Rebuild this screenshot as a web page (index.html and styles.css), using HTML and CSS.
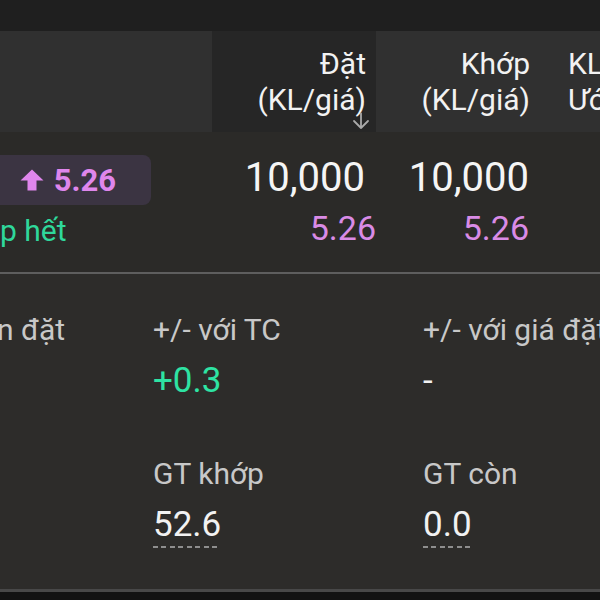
FILE: index.html
```html
<!DOCTYPE html>
<html lang="vi">
<head>
<meta charset="utf-8">
<title>Lệnh đặt</title>
<link rel="stylesheet" href="styles.css">
</head>
<body>
<div class="screen">
  <div class="topbar"></div>

  <div class="thead">
    <div class="th th-blank"></div>
    <div class="th th-sorted">
      <span>Đặt</span>
      <span>(KL/giá)</span>
      <svg class="sort-icon" viewBox="0 0 20 20" width="20" height="20" aria-hidden="true">
        <path d="M10 2.5 V17 M3 10 L10 17 L17 10" fill="none" stroke="#a9a9a9" stroke-width="1.8" stroke-linecap="round" stroke-linejoin="round"/>
      </svg>
    </div>
    <div class="th">
      <span>Khớp</span>
      <span>(KL/giá)</span>
    </div>
    <div class="th th-left">
      <span>KL</span>
      <span>Ước</span>
    </div>
  </div>

  <div class="trow">
    <div class="cell-status">
      <div class="badge">
        <svg class="badge-arrow" viewBox="0 0 24 22" width="24" height="22" aria-hidden="true">
          <path d="M12 0.5 L23.5 11.5 H16.5 V21.5 H7.5 V11.5 H0.5 Z" fill="#df86ec"/>
        </svg>
        <span class="badge-text">5.26</span>
      </div>
      <div class="status-text">p hết</div>
    </div>
    <div class="cell-num cell-first">
      <span class="qty">10,000</span>
      <span class="price">5.26</span>
    </div>
    <div class="cell-num">
      <span class="qty">10,000</span>
      <span class="price">5.26</span>
    </div>
    <div class="cell-rest"></div>
  </div>

  <div class="divider"></div>

  <div class="details">
    <div class="field field-clip">
      <span class="label">n đặt</span>
    </div>
    <div class="field">
      <span class="label">+/- với TC</span>
      <span class="value up">+0.3</span>
    </div>
    <div class="field">
      <span class="label">+/- với giá đặt</span>
      <span class="value">-</span>
    </div>

    <div class="field"></div>
    <div class="field">
      <span class="label">GT khớp</span>
      <span class="value"><span class="dashed">52.6</span></span>
    </div>
    <div class="field">
      <span class="label">GT còn</span>
      <span class="value"><span class="dashed">0.0</span></span>
    </div>
  </div>

  <div class="bottombar"></div>
</div>
</body>
</html>
```
FILE: styles.css
```css
* { box-sizing: border-box; }

html, body {
  margin: 0;
  padding: 0;
  background: #121212;
}

body {
  font-family: Roboto, "Noto Sans", "Liberation Sans", sans-serif;
  color: #f2f2f2;
  width: 600px;
  height: 600px;
  overflow: hidden;
}

.screen {
  width: 600px;
  height: 600px;
  display: flex;
  flex-direction: column;
  overflow: hidden;
}

.topbar {
  height: 31px;
  flex: none;
  background: #1f1f1f;
}

/* header */
.thead {
  height: 101px;
  flex: none;
  display: grid;
  grid-template-columns: 212px 164px 164px 1fr;
  background: #303030;
  font-size: 30px;
  line-height: 36px;
}

.th {
  display: flex;
  flex-direction: column;
  align-items: flex-end;
  padding: 15px 10px 0 0;
  white-space: nowrap;
}

.th-blank { padding: 0; }

.th-sorted {
  position: relative;
  background: #262626;
}

.th-left {
  align-items: flex-start;
  padding: 15px 0 0 28px;
}

.sort-icon {
  position: absolute;
  right: 5px;
  top: 80px;
}

/* data row */
.trow {
  height: 139px;
  flex: none;
  display: grid;
  grid-template-columns: 212px 164px 164px 1fr;
  background: #2b2a28;
}

.cell-status {
  display: flex;
  flex-direction: column;
  align-items: flex-start;
  padding-top: 23px;
}

.badge {
  height: 50px;
  width: 171px;
  margin-left: -20px;
  border-radius: 8px;
  background: #3b3442;
  display: flex;
  align-items: center;
  justify-content: flex-end;
  gap: 10px;
  padding-right: 35px;
}

.badge-arrow { flex: none; }

.badge-text {
  font-size: 31px;
  font-weight: 700;
  color: #df86ec;
  line-height: 1;
}

.status-text {
  margin-top: 8px;
  font-size: 30px;
  line-height: 36px;
  color: #2fd89b;
  white-space: nowrap;
}

.cell-num {
  display: flex;
  flex-direction: column;
  align-items: flex-end;
  padding: 22px 11px 0 0;
}

.qty {
  font-size: 40px;
  line-height: 47px;
  color: #f5f5f5;
}

.price {
  margin-top: 7px;
  font-size: 34px;
  line-height: 40px;
  color: #d98be6;
}

.cell-first .price { margin-right: -11px; }
.cell-first .qty { margin-right: 0; }

.divider {
  height: 3px;
  flex: none;
  background: #5e5e5e;
  border-top: 1px solid #2b2a28;
}

/* details */
.details {
  flex: none;
  height: 315px;
  background: #2d2c2a;
  display: grid;
  grid-template-columns: 153px 270px 1fr;
  grid-auto-rows: auto;
  padding-top: 38px;
  row-gap: 55px;
  align-content: start;
}

.field {
  display: flex;
  flex-direction: column;
  align-items: flex-start;
  white-space: nowrap;
  gap: 13px;
}

.field-clip { margin-left: -3px; }

.label {
  font-size: 30px;
  line-height: 36px;
  color: #c8c8c8;
}

.value {
  font-size: 35px;
  line-height: 40px;
  color: #f2f2f2;
}

.value.up { color: #2ee3a3; }

.dashed {
  display: inline-block;
  line-height: 40px;
  padding-bottom: 3px;
  background-image: repeating-linear-gradient(to right, #8e8e8e 0 5px, transparent 5px 8.5px);
  background-size: 100% 2px;
  background-position: left bottom;
  background-repeat: no-repeat;
}

.bottombar {
  flex: none;
  height: 3px;
  background: #484848;
}
```
